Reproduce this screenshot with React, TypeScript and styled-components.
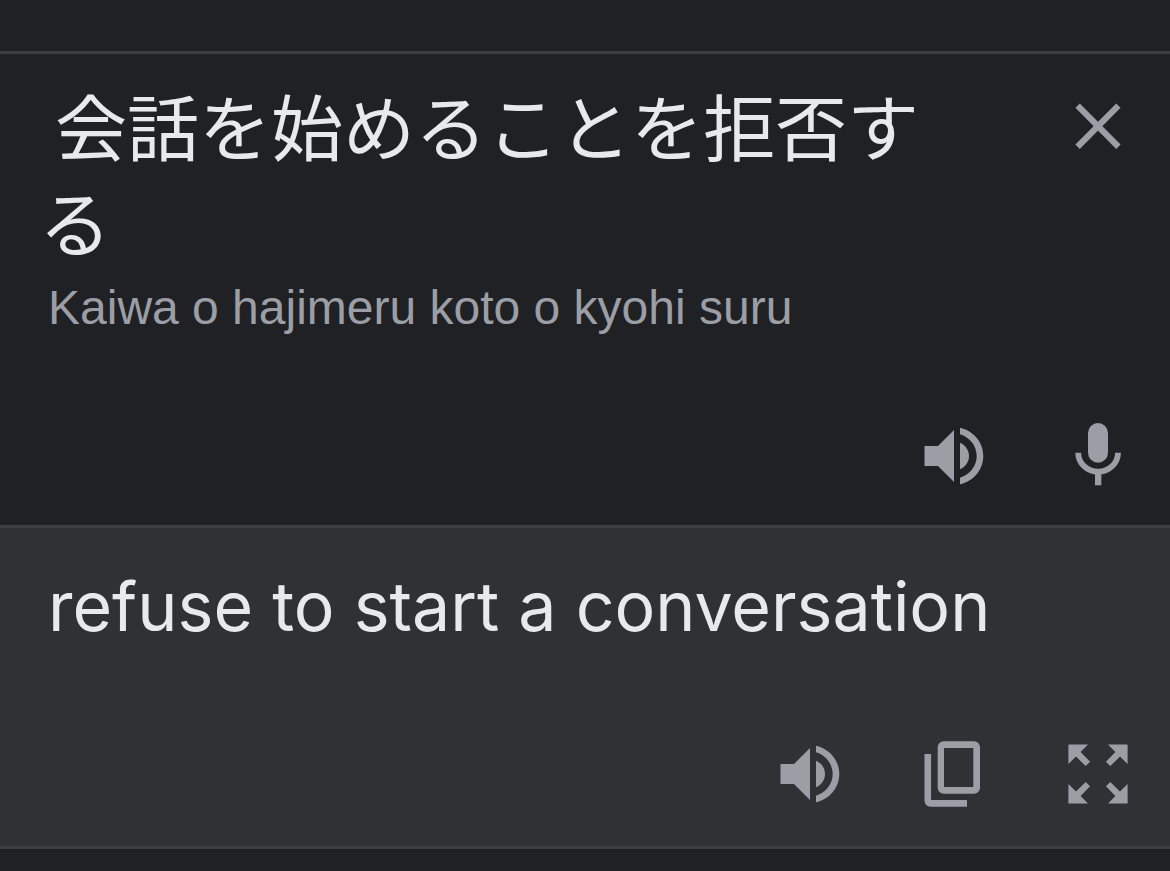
import React from 'react';
import styled, { createGlobalStyle } from 'styled-components';

const color = {
  page: '#202124',
  panel: '#303134',
  line: '#3d3e42',
  text: '#e8e9ed',
  muted: '#9c9ea6',
};

const GlobalStyle = createGlobalStyle`
  *, *::before, *::after { box-sizing: border-box; }
  body {
    margin: 0;
    min-height: 100vh;
    background: ${color.page};
    color: ${color.text};
  }
`;

const TopBar = styled.header`
  height: 51px;
`;

const Panel = styled.section<{ $raised?: boolean }>`
  display: flex;
  flex-direction: column;
  border-top: 3px solid ${color.line};
  background: ${(p) => (p.$raised ? color.panel : color.page)};
`;

const SourceRow = styled.div`
  display: flex;
  align-items: flex-start;
  padding: 22px 0 0 39px;
`;

const SourceText = styled.textarea`
  flex: 1;
  min-width: 0;
  height: 192px;
  margin: 0 48px 0 0;
  padding: 0;
  border: 0;
  outline: 0;
  resize: none;
  overflow: hidden;
  background: transparent;
  color: inherit;
  font-family: 'Noto Sans CJK JP', sans-serif;
  font-size: 72px;
  font-weight: 400;
  line-height: 96px;
  text-indent: 16px;
`;

const Romanization = styled.p`
  margin: 12px 48px 0;
  color: ${color.muted};
  font-family: 'Liberation Sans', sans-serif;
  font-size: 48px;
  line-height: 56px;
`;

const Translation = styled.p`
  margin: 30px 48px 0;
  font-family: Inter, sans-serif;
  font-size: 68px;
  line-height: 96px;
`;

const Actions = styled.div<{ $top: number; $bottom: number }>`
  display: flex;
  justify-content: flex-end;
  padding: ${(p) => p.$top}px 0 ${(p) => p.$bottom}px;
`;

const IconButton = styled.button`
  display: flex;
  flex: none;
  justify-content: center;
  width: 144px;
  padding: 0;
  border: 0;
  background: none;
  color: ${color.muted};
  cursor: pointer;
`;

const Glyph = styled.svg.attrs({ viewBox: '0 0 72 72', 'aria-hidden': true })`
  display: block;
  width: 72px;
  height: 72px;
  fill: currentColor;
`;

const CloseSlot = styled.div`
  padding-top: 14px;
`;

const BottomBar = styled.footer`
  height: 22px;
  border-top: 3px solid ${color.line};
`;

const CloseIcon = () => (
  <Glyph>
    <path d="M15.6 15.6 56.4 56.7M56.4 15.6 15.6 56.7" fill="none" stroke="currentColor" strokeWidth="6.2" />
  </Glyph>
);

const SpeakerIcon = () => (
  <Glyph>
    <path d="M6.5 26H20L36 10V62L20 46H6.5Z" />
    <path d="M42 22.7c5.5 2.5 9 7.5 9 13.3s-3.5 10.8-9 13.3z" />
    <path d="M42 7.7C55.5 10.7 65.3 22.3 65.3 36S55.5 61.3 42 64.3v-6.6C51.6 54.8 58.7 46.2 58.7 36S51.6 17.2 42 14.3z" />
  </Glyph>
);

const MicIcon = () => (
  <Glyph>
    <rect x="26" y="3" width="20" height="39.7" rx="10" />
    <path d="M16.2 32.7a19.9 19 0 0 0 39.8 0" fill="none" stroke="currentColor" strokeWidth="5.8" />
    <path d="M33 52h6.3v13.3H33z" />
  </Glyph>
);

const CopyIcon = () => (
  <Glyph>
    <path
      fillRule="evenodd"
      d="M25.7 3.3H56a6 6 0 0 1 6 6v40.4a6 6 0 0 1-6 6H25.7a6 6 0 0 1-6-6V9.3a6 6 0 0 1 6-6zM26 10v39h29.3V10z"
    />
    <path d="M6.5 16h6.6v46H49v6.8H12.5a6 6 0 0 1-6-6z" />
  </Glyph>
);

const ExpandIcon = () => (
  <Glyph>
    {[0, 90, 180, 270].map((angle) => (
      <path
        key={angle}
        transform={`rotate(${angle} 36 36)`}
        d="M6.4 6.4H26L18.6 14l9.5 9.7-4.4 4.4-9.7-9.5L6.4 26z"
      />
    ))}
  </Glyph>
);

export default function App() {
  return (
    <>
      <GlobalStyle />
      <TopBar />
      <main>
        <Panel>
          <SourceRow>
            <SourceText
              aria-label="Source text"
              lang="ja"
              spellCheck={false}
              defaultValue="会話を始めることを拒否する"
            />
            <CloseSlot>
              <IconButton type="button" aria-label="Clear source text">
                <CloseIcon />
              </IconButton>
            </CloseSlot>
          </SourceRow>
          <Romanization>Kaiwa o hajimeru koto o kyohi suru</Romanization>
          <Actions $top={84} $bottom={33}>
            <IconButton type="button" aria-label="Listen to source text">
              <SpeakerIcon />
            </IconButton>
            <IconButton type="button" aria-label="Translate by voice">
              <MicIcon />
            </IconButton>
          </Actions>
        </Panel>
        <Panel $raised>
          <Translation lang="en">refuse to start a conversation</Translation>
          <Actions $top={84} $bottom={36}>
            <IconButton type="button" aria-label="Listen to translation">
              <SpeakerIcon />
            </IconButton>
            <IconButton type="button" aria-label="Copy translation">
              <CopyIcon />
            </IconButton>
            <IconButton type="button" aria-label="Show full screen">
              <ExpandIcon />
            </IconButton>
          </Actions>
        </Panel>
      </main>
      <BottomBar />
    </>
  );
}
